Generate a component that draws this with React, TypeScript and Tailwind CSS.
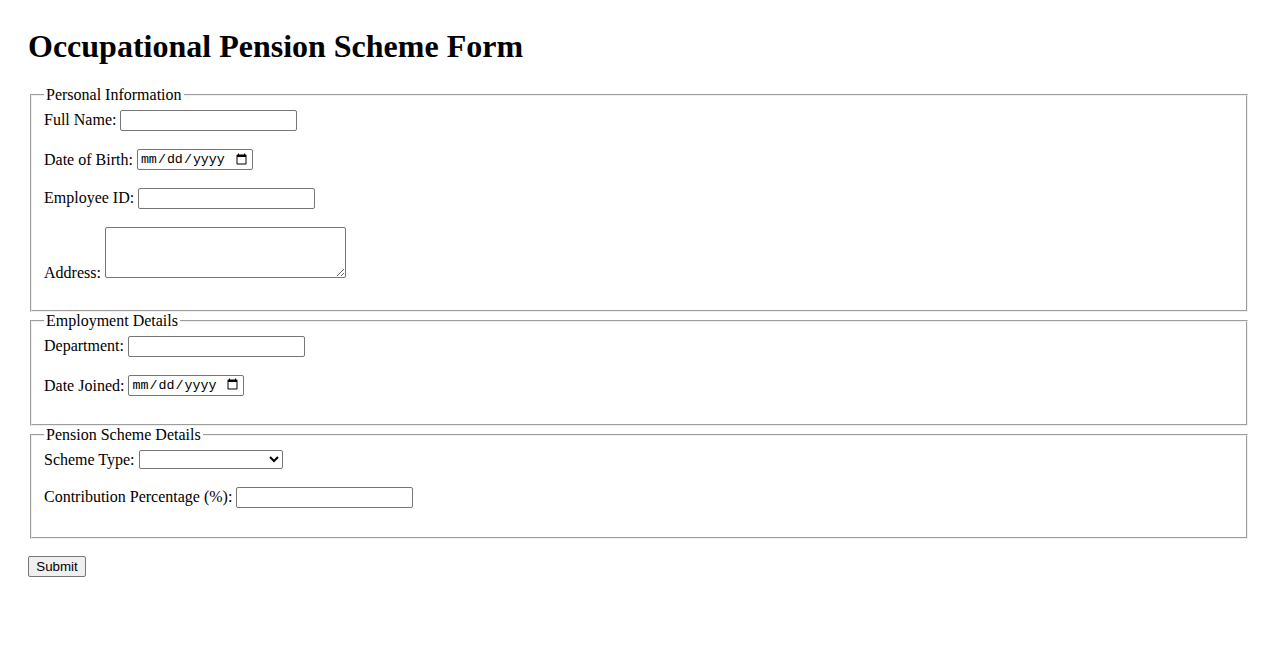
import React from "react";

const inputCls =
  "inline-block h-[21px] border border-[#767676] rounded-[2px] px-[2px] py-[1px] bg-white text-[13.3333px] [font-family:'Liberation_Sans',Arial,sans-serif] align-baseline";
const dateCls =
  "inline-block w-[116px] h-[21px] border border-[#767676] rounded-[2px] px-[2px] py-[1px] bg-white text-[13.3333px] [font-family:'Liberation_Mono',monospace] align-[2px]";
const fieldsetCls =
  "mx-[2px] border-2 [border-style:groove] border-[#f0f0f0] pt-[5.6px] px-[12px] pb-[10px] min-w-0";
const legendCls = "px-[2px]";

function Row({ children, className = "h-[24px]" }: { children: React.ReactNode; className?: string }) {
  return <div className={`mb-[15px] ${className}`}>{children}</div>;
}

export default function App() {
  return (
    <div className="bg-white text-black min-h-[650px] px-[28px] pt-[28px] text-[16px] leading-[normal] [font-family:'Liberation_Serif','Times_New_Roman',serif]">
      <h1 className="text-[32px] font-bold mb-[21.44px]">Occupational Pension Scheme Form</h1>
      <form onSubmit={(e) => e.preventDefault()}>
        <fieldset className={fieldsetCls}>
          <legend className={legendCls}>Personal Information</legend>
          <Row>
            <label htmlFor="fullName">Full Name:</label>{" "}
            <input id="fullName" type="text" className={`${inputCls} w-[177px]`} />
          </Row>
          <Row>
            <label htmlFor="dob">Date of Birth:</label>{" "}
            <input id="dob" type="date" className={dateCls} />
          </Row>
          <Row>
            <label htmlFor="empId">Employee ID:</label>{" "}
            <input id="empId" type="text" className={`${inputCls} w-[177px]`} />
          </Row>
          <Row className="pb-[3px]">
            <label htmlFor="address">Address:</label>{" "}
            <textarea
              id="address"
              rows={3}
              className="inline-block w-[241px] h-[51px] border border-[#767676] rounded-[2px] p-[2px] bg-white text-[13.3333px] [font-family:'Liberation_Mono',monospace] align-baseline resize"
            />
          </Row>
        </fieldset>
        <fieldset className={fieldsetCls}>
          <legend className={legendCls}>Employment Details</legend>
          <Row>
            <label htmlFor="dept">Department:</label>{" "}
            <input id="dept" type="text" className={`${inputCls} w-[177px]`} />
          </Row>
          <Row>
            <label htmlFor="joined">Date Joined:</label>{" "}
            <input id="joined" type="date" className={dateCls} />
          </Row>
        </fieldset>
        <fieldset className={fieldsetCls}>
          <legend className={legendCls}>Pension Scheme Details</legend>
          <Row className="h-[23px] pt-[1px]">
            <label htmlFor="scheme">Scheme Type:</label>{" "}
            <select
              id="scheme"
              className="inline-block w-[144px] h-[19px] border border-[#767676] rounded-[2px] bg-white text-[13.3333px] [font-family:'Liberation_Sans',Arial,sans-serif] align-[1px]"
              defaultValue=""
            >
              <option value=""></option>
              <option value="defined-benefit">Defined Benefit</option>
              <option value="defined-contribution">Defined Contribution</option>
            </select>
          </Row>
          <Row className="h-[25px]">
            <label htmlFor="contrib">Contribution Percentage (%):</label>{" "}
            <input id="contrib" type="number" className={`${inputCls} w-[177px]`} />
          </Row>
        </fieldset>
        <div className="mt-[17px]">
          <button
            type="submit"
            className="inline-block w-[58px] h-[21px] px-[6px] py-[1px] border border-[#767676] rounded-[2px] bg-[#efefef] text-[13.3333px] [font-family:'Liberation_Sans',Arial,sans-serif]"
          >
            Submit
          </button>
        </div>
      </form>
    </div>
  );
}
